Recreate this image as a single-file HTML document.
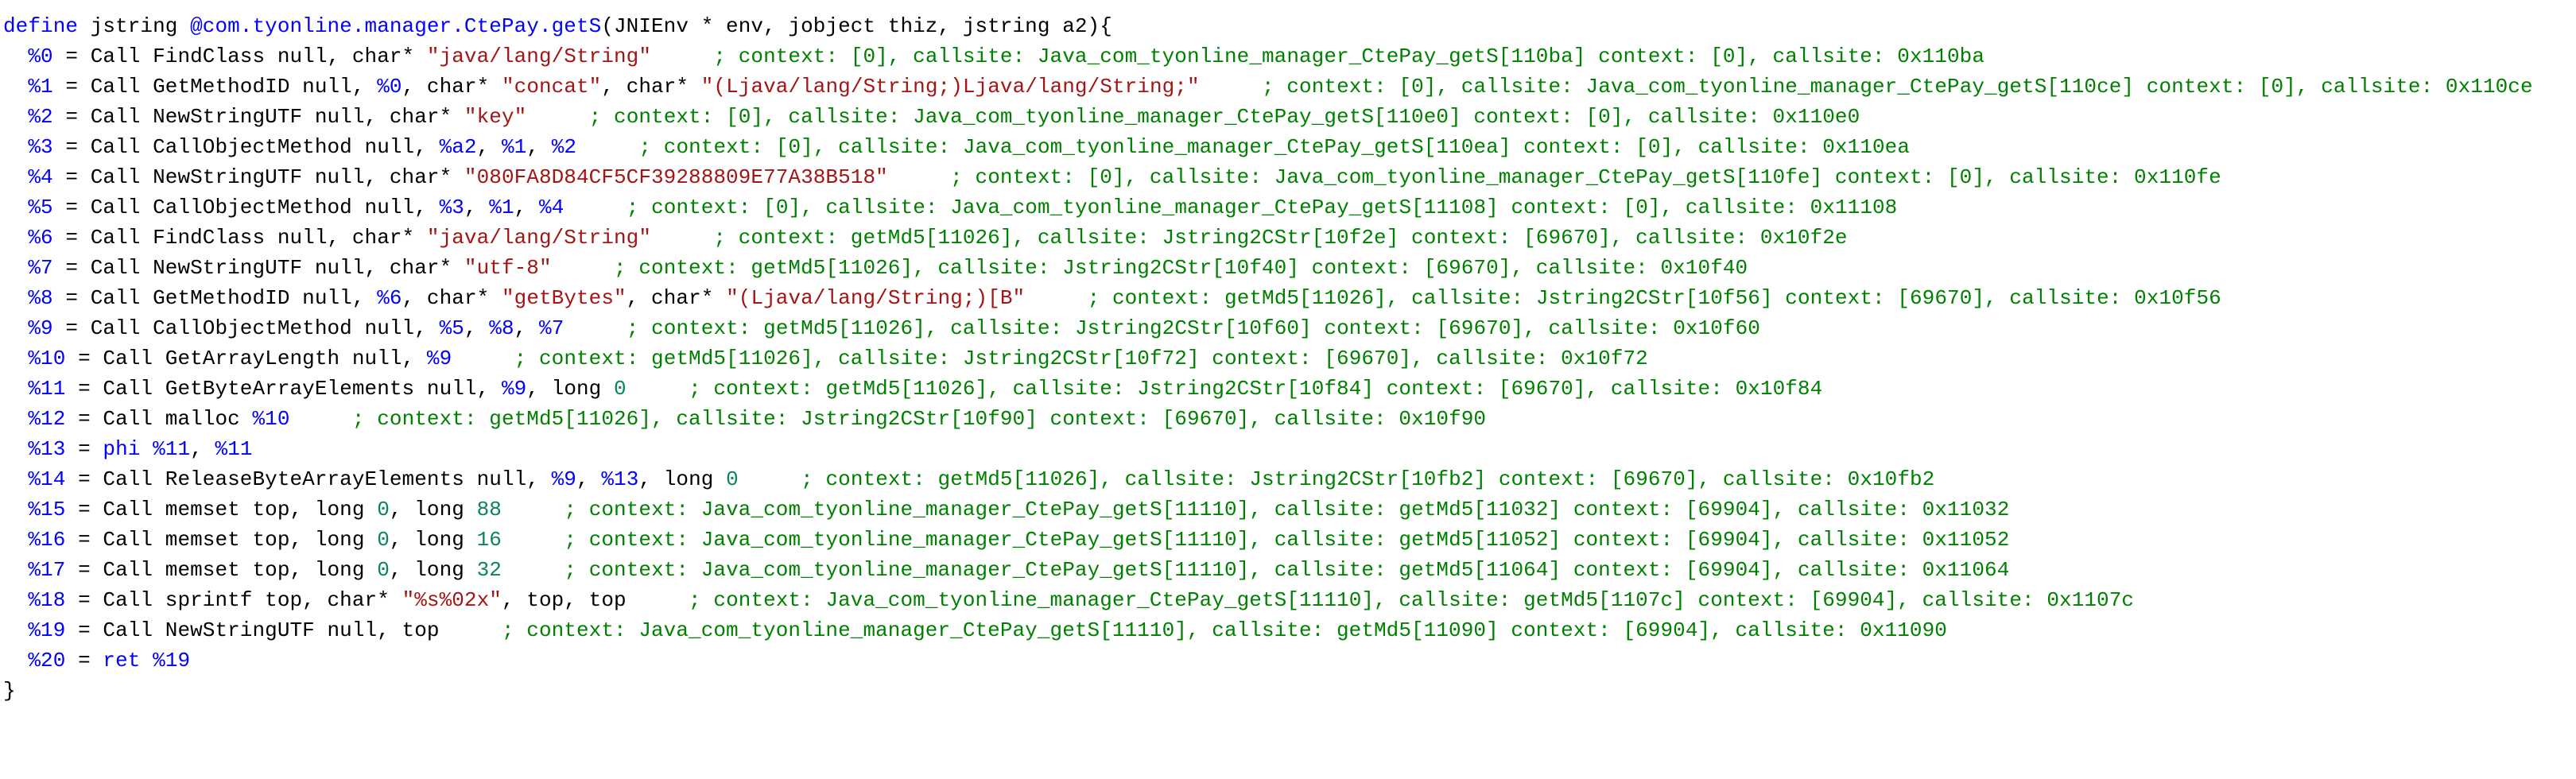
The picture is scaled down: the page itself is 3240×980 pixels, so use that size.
<!DOCTYPE html>
<html><head><meta charset="utf-8"><style>
html,body{margin:0;padding:0;background:#fff;width:3240px;height:980px;overflow:hidden}
pre{margin:0;padding:14px 0 0 4px;font-family:"Liberation Mono",monospace;font-size:26px;line-height:38px;letter-spacing:0.07px;color:#000;white-space:pre}
.b{color:#0000ff}.r{color:#a31515}.g{color:#008000}.n{color:#098658}
</style></head><body><pre><span class="b">define</span> jstring <span class="b">@com.tyonline.manager.CtePay.getS</span>(JNIEnv * env, jobject thiz, jstring a2){
  <span class="b">%0</span> = Call FindClass null, char* <span class="r">"java/lang/String"</span>     <span class="g">; context: [0], callsite: Java_com_tyonline_manager_CtePay_getS[110ba] context: [0], callsite: 0x110ba</span>
  <span class="b">%1</span> = Call GetMethodID null, <span class="b">%0</span>, char* <span class="r">"concat"</span>, char* <span class="r">"(Ljava/lang/String;)Ljava/lang/String;"</span>     <span class="g">; context: [0], callsite: Java_com_tyonline_manager_CtePay_getS[110ce] context: [0], callsite: 0x110ce</span>
  <span class="b">%2</span> = Call NewStringUTF null, char* <span class="r">"key"</span>     <span class="g">; context: [0], callsite: Java_com_tyonline_manager_CtePay_getS[110e0] context: [0], callsite: 0x110e0</span>
  <span class="b">%3</span> = Call CallObjectMethod null, <span class="b">%a2</span>, <span class="b">%1</span>, <span class="b">%2</span>     <span class="g">; context: [0], callsite: Java_com_tyonline_manager_CtePay_getS[110ea] context: [0], callsite: 0x110ea</span>
  <span class="b">%4</span> = Call NewStringUTF null, char* <span class="r">"080FA8D84CF5CF39288809E77A38B518"</span>     <span class="g">; context: [0], callsite: Java_com_tyonline_manager_CtePay_getS[110fe] context: [0], callsite: 0x110fe</span>
  <span class="b">%5</span> = Call CallObjectMethod null, <span class="b">%3</span>, <span class="b">%1</span>, <span class="b">%4</span>     <span class="g">; context: [0], callsite: Java_com_tyonline_manager_CtePay_getS[11108] context: [0], callsite: 0x11108</span>
  <span class="b">%6</span> = Call FindClass null, char* <span class="r">"java/lang/String"</span>     <span class="g">; context: getMd5[11026], callsite: Jstring2CStr[10f2e] context: [69670], callsite: 0x10f2e</span>
  <span class="b">%7</span> = Call NewStringUTF null, char* <span class="r">"utf-8"</span>     <span class="g">; context: getMd5[11026], callsite: Jstring2CStr[10f40] context: [69670], callsite: 0x10f40</span>
  <span class="b">%8</span> = Call GetMethodID null, <span class="b">%6</span>, char* <span class="r">"getBytes"</span>, char* <span class="r">"(Ljava/lang/String;)[B"</span>     <span class="g">; context: getMd5[11026], callsite: Jstring2CStr[10f56] context: [69670], callsite: 0x10f56</span>
  <span class="b">%9</span> = Call CallObjectMethod null, <span class="b">%5</span>, <span class="b">%8</span>, <span class="b">%7</span>     <span class="g">; context: getMd5[11026], callsite: Jstring2CStr[10f60] context: [69670], callsite: 0x10f60</span>
  <span class="b">%10</span> = Call GetArrayLength null, <span class="b">%9</span>     <span class="g">; context: getMd5[11026], callsite: Jstring2CStr[10f72] context: [69670], callsite: 0x10f72</span>
  <span class="b">%11</span> = Call GetByteArrayElements null, <span class="b">%9</span>, long <span class="n">0</span>     <span class="g">; context: getMd5[11026], callsite: Jstring2CStr[10f84] context: [69670], callsite: 0x10f84</span>
  <span class="b">%12</span> = Call malloc <span class="b">%10</span>     <span class="g">; context: getMd5[11026], callsite: Jstring2CStr[10f90] context: [69670], callsite: 0x10f90</span>
  <span class="b">%13</span> = <span class="b">phi</span> <span class="b">%11</span>, <span class="b">%11</span>
  <span class="b">%14</span> = Call ReleaseByteArrayElements null, <span class="b">%9</span>, <span class="b">%13</span>, long <span class="n">0</span>     <span class="g">; context: getMd5[11026], callsite: Jstring2CStr[10fb2] context: [69670], callsite: 0x10fb2</span>
  <span class="b">%15</span> = Call memset top, long <span class="n">0</span>, long <span class="n">88</span>     <span class="g">; context: Java_com_tyonline_manager_CtePay_getS[11110], callsite: getMd5[11032] context: [69904], callsite: 0x11032</span>
  <span class="b">%16</span> = Call memset top, long <span class="n">0</span>, long <span class="n">16</span>     <span class="g">; context: Java_com_tyonline_manager_CtePay_getS[11110], callsite: getMd5[11052] context: [69904], callsite: 0x11052</span>
  <span class="b">%17</span> = Call memset top, long <span class="n">0</span>, long <span class="n">32</span>     <span class="g">; context: Java_com_tyonline_manager_CtePay_getS[11110], callsite: getMd5[11064] context: [69904], callsite: 0x11064</span>
  <span class="b">%18</span> = Call sprintf top, char* <span class="r">"%s%02x"</span>, top, top     <span class="g">; context: Java_com_tyonline_manager_CtePay_getS[11110], callsite: getMd5[1107c] context: [69904], callsite: 0x1107c</span>
  <span class="b">%19</span> = Call NewStringUTF null, top     <span class="g">; context: Java_com_tyonline_manager_CtePay_getS[11110], callsite: getMd5[11090] context: [69904], callsite: 0x11090</span>
  <span class="b">%20</span> = <span class="b">ret</span> <span class="b">%19</span>
}</pre></body></html>
